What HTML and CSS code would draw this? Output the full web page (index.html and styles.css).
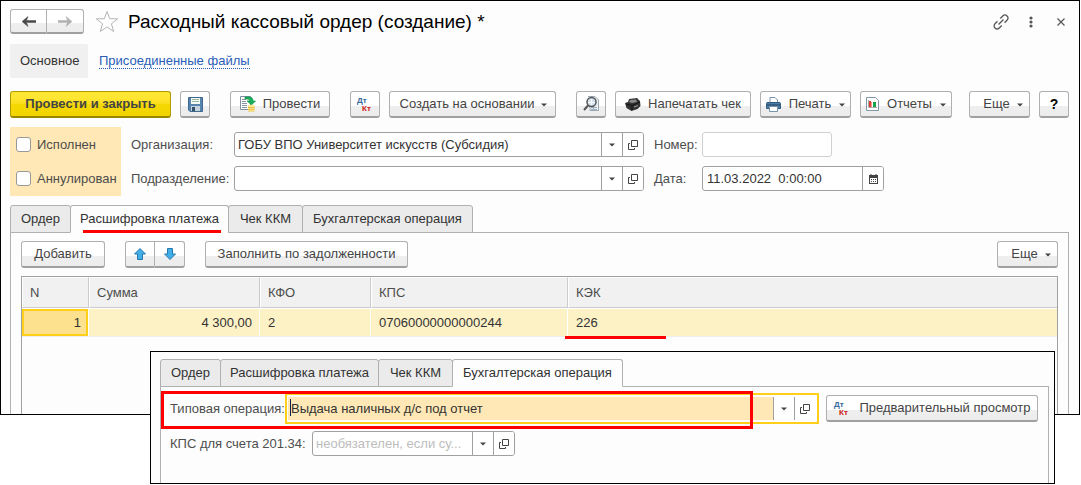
FILE: index.html
```html
<!DOCTYPE html>
<html lang="ru">
<head>
<meta charset="utf-8">
<meta name="viewport" content="width=device-width, initial-scale=1">
<title>Расходный кассовый ордер (создание)</title>
<link rel="stylesheet" href="styles.css">
</head>
<body>
<svg class="defs" aria-hidden="true">
  <symbol id="open" viewBox="0 0 10 10"><path d="M3.500.5h6v6h-6zM2 3.500H.5v6h6V8" fill="none" stroke="#444"/></symbol>
  <symbol id="caret" viewBox="0 0 6 4"><path d="M0 .5h6L3 3.500z" fill="#444"/></symbol>
</svg>

<main class="window">
  <header class="titlebar">
    <div class="btn-pair">
      <button class="btn" aria-label="Назад"><svg width="14" height="11" viewBox="0 0 14 11"><path d="M0 5.500L6 .5l-1.500 4H14v2H4.500l1.500 4z" fill="#4a4a4a" stroke="#4a4a4a" stroke-width=".5"/></svg></button>
      <button class="btn" aria-label="Вперед"><svg width="14" height="11" viewBox="0 0 14 11"><path d="M14 5.500L8 .5l1.500 4H0v2h9.500l-1.500 4z" fill="#b0b0b0" stroke="#b0b0b0" stroke-width=".5"/></svg></button>
    </div>
    <button class="bare star" aria-label="Избранное"><svg width="24" height="23" viewBox="0 0 24 23"><path d="M12 1.500l2.700 7.200 8 .2-6.300 4.900 2.300 7.700-6.700-4.600-6.700 4.600 2.300-7.700L1.300 8.900l8-.2z" fill="#fff" stroke="#b4b4b4"/></svg></button>
    <h1 class="title">Расходный кассовый ордер (создание) *</h1>
    <div class="window-tools">
      <button class="bare" aria-label="Ссылка"><svg width="18" height="18" viewBox="0 0 18 18"><g transform="rotate(-45 9 9)" fill="none" stroke="#555" stroke-width="1.300"><path d="M7 6H3.500a3 3 0 0 0 0 6H7M11 6h3.500a3 3 0 0 1 0 6H11M5.500 9h7"/></g></svg></button>
      <button class="bare" aria-label="Меню"><svg width="4" height="12" viewBox="0 0 4 12"><g fill="#555"><circle cx="2" cy="2" r="1.600"/><circle cx="2" cy="6" r="1.600"/><circle cx="2" cy="10" r="1.600"/></g></svg></button>
      <button class="bare" aria-label="Закрыть"><svg width="8" height="8" viewBox="0 0 8 8"><path d="M.5.5l7 7M7.500.5l-7 7" stroke="#555" stroke-width="1.200"/></svg></button>
    </div>
  </header>

  <nav class="sections">
    <span class="section-current">Основное</span>
    <a class="section-link" href="#files">Присоединенные файлы</a>
  </nav>

  <div class="commands">
    <button class="btn btn-primary">Провести и закрыть</button>
    <button class="btn btn-icon" aria-label="Записать"><svg width="15" height="15" viewBox="0 0 15 15"><path d="M.5.5h14v14H2l-1.500-1.500z" fill="#5684ad" stroke="#41698f"/><path d="M3 1h9v6H3z" fill="#f5faf5"/><path d="M4 2.500h7M4 4.500h7" stroke="#9ab99e"/><path d="M3 9h9v5H3z" fill="#c7d3dc"/><path d="M4 10h3v4H4z" fill="#344f68"/></svg></button>
    <button class="btn btn-post gap-wide"><svg width="16" height="16" viewBox="0 0 16 16"><path d="M.5.5h10v13H.5z" fill="#fff" stroke="#8090a0"/><path d="M2 3.500h4M2 5.500h4M2 7.500h5M2 9.500h5M2 11.500h5" stroke="#8797a5"/><path d="M5 1h4c3 0 4 1.500 4 4h2.500L11.500 9 7 5h2.500c0-2-1.500-2-4.500-2z" fill="#18b05a" stroke="#088a40" stroke-width=".6"/><path d="M8 10h6.500v5.500H8z" fill="#e9ba37"/><ellipse cx="11.200" cy="10" rx="3.200" ry="1.200" fill="#ffe995"/><path d="M8 12.200c2 1 4.500 1 6.500 0M8 14.200c2 1 4.500 1 6.500 0" fill="none" stroke="#fff1ad"/></svg>Провести</button>
    <button class="btn btn-icon gap-wide" aria-label="Проводки"><svg class="dtkt" width="18" height="18" viewBox="0 0 18 18"><text x="1" y="8" fill="#336699">Дт</text><text x="6" y="16" fill="#cc2010">Кт</text></svg></button>
    <button class="btn btn-create">Создать на основании<svg class="drop" width="6" height="4"><use href="#caret"/></svg></button>
    <button class="btn btn-icon gap-wide" aria-label="Просмотр"><svg width="16" height="16" viewBox="0 0 16 16"><path d="M5 .5h7l3.500 3.500v10.500H7V8" fill="#edf2f5" stroke="#9ca9b2"/><path d="M8 11.500h6M8 13.500h6M10.500 8v6" stroke="#9baebb"/><circle cx="8.500" cy="6" r="4.500" fill="#d4e3ed" stroke="#555" stroke-width="1.500"/><path d="M5 6.500h7M8.500 3v6" stroke="#f7fbff"/><path d="M5 9.500L1 14" stroke="#555" stroke-width="2"/></svg></button>
    <button class="btn btn-check"><svg width="16" height="13" viewBox="0 0 16 13"><path d="M0 5l3-1 1-3 8-1 3 3 .5 5-3 3-6 2-5-3z" fill="#333"/><path d="M5 2l6-.5 1 2.500-5 1-3-1z" fill="#888"/><path d="M1 6l6 1.500 8-3.500M7 8v4" fill="none" stroke="#111"/><path d="M9 9l4-1.500" stroke="#999"/></svg>Напечатать чек</button>
    <button class="btn btn-print"><svg width="15" height="15" viewBox="0 0 15 15"><path d="M4 6V.5h5l2.500 2.500v3" fill="#fff" stroke="#7992aa"/><path d="M1 5.500h13l.5 1v5H.5v-5z" fill="#4c7da8" stroke="#315a80"/><path d="M1 8h13" stroke="#20415f"/><path d="M3.500 9.500h8v5h-8z" fill="#fff" stroke="#7992aa"/></svg>Печать<svg class="drop" width="6" height="4"><use href="#caret"/></svg></button>
    <button class="btn btn-report"><svg width="13" height="14" viewBox="0 0 13 14"><path d="M.5.5h9l3 3v10H.5z" fill="#fff" stroke="#8496a8"/><path d="M2.500 3v7.500H11" fill="none" stroke="#aaa"/><path d="M3 4h2v6H3z" fill="#e23b2f"/><path d="M5 5h1v5H5z" fill="#f29b8f"/><path d="M7 5h3v5H7z" fill="#18a348"/></svg>Отчеты<svg class="drop" width="6" height="4"><use href="#caret"/></svg></button>
    <button class="btn btn-more push">Еще<svg class="drop" width="6" height="4"><use href="#caret"/></svg></button>
    <button class="btn btn-icon btn-help">?</button>
  </div>

  <form class="form">
    <div class="flags">
      <label class="flag"><input type="checkbox">Исполнен</label>
      <label class="flag"><input type="checkbox">Аннулирован</label>
    </div>
    <div class="fields">
      <label for="org">Организация:</label>
      <div class="field"><input id="org" type="text" value="ГОБУ ВПО Университет искусств (Субсидия)"><button type="button" aria-label="Список"><svg width="6" height="4"><use href="#caret"/></svg></button><button type="button" aria-label="Открыть"><svg width="10" height="10"><use href="#open"/></svg></button></div>
      <label for="num" class="second">Номер:</label>
      <div class="field field-number"><input id="num" type="text"></div>
      <label for="dep">Подразделение:</label>
      <div class="field"><input id="dep" type="text"><button type="button" aria-label="Список"><svg width="6" height="4"><use href="#caret"/></svg></button><button type="button" aria-label="Открыть"><svg width="10" height="10"><use href="#open"/></svg></button></div>
      <label for="date" class="second">Дата:</label>
      <div class="field field-date"><input id="date" type="text" value="11.03.2022  0:00:00"><button type="button" aria-label="Календарь"><svg width="9" height="10" viewBox="0 0 9 10"><path d="M0 1h9v9H0z" fill="#444"/><path d="M1 4h7v5H1z" fill="#fff"/><path d="M2 0v2M7 0v2" stroke="#444"/><path d="M2 5.500h5M2 7.500h5" stroke="#444" stroke-dasharray="1 1"/></svg></button></div>
    </div>
  </form>

  <div class="tabs">
    <button class="tab tab-order">Ордер</button>
    <button class="tab tab-detail active marked">Расшифровка платежа</button>
    <button class="tab tab-kkm">Чек ККМ</button>
    <button class="tab tab-entry">Бухгалтерская операция</button>
  </div>
  <section class="panel">
    <div class="panel-tools">
      <button class="btn btn-add">Добавить</button>
      <div class="btn-pair pair-blue">
        <button class="btn" aria-label="Вверх"><svg width="12" height="12" viewBox="0 0 12 12"><path d="M6 .5l5.500 5.500H8.500v5.500h-5V6H.5z" fill="#42aee8" stroke="#2878aa"/></svg></button>
        <button class="btn" aria-label="Вниз"><svg width="12" height="12" viewBox="0 0 12 12"><path d="M6 11.500L.5 6h3V.5h5V6h3z" fill="#42aee8" stroke="#2878aa"/></svg></button>
      </div>
      <button class="btn btn-fill gap-wide">Заполнить по задолженности</button>
      <button class="btn btn-more push">Еще<svg class="drop" width="6" height="4"><use href="#caret"/></svg></button>
    </div>
    <div class="grid-box">
      <table class="grid">
        <colgroup><col class="c-n"><col class="c-sum"><col class="c-kfo"><col class="c-kps"><col></colgroup>
        <thead><tr><th>N</th><th>Сумма</th><th>КФО</th><th>КПС</th><th>КЭК</th></tr></thead>
        <tbody><tr><td class="num selected">1</td><td class="num">4 300,00</td><td>2</td><td>07060000000000244</td><td class="underlined">226</td></tr></tbody>
      </table>
    </div>
  </section>
</main>

<aside class="inset">
  <div class="tabs">
    <button class="tab tab-order">Ордер</button>
    <button class="tab tab-detail">Расшифровка платежа</button>
    <button class="tab tab-kkm">Чек ККМ</button>
    <button class="tab tab-entry active">Бухгалтерская операция</button>
  </div>
  <section class="panel inset-panel">
    <div class="row">
      <label for="op">Типовая операция:</label>
      <div class="field field-focus"><span class="cursor"></span><input id="op" type="text" value="Выдача наличных д/с под отчет"><button aria-label="Список"><svg width="6" height="4"><use href="#caret"/></svg></button><button aria-label="Открыть"><svg width="10" height="10"><use href="#open"/></svg></button></div>
      <button class="btn btn-preview"><svg class="dtkt" width="18" height="18" viewBox="0 0 18 18"><text x="1" y="8" fill="#336699">Дт</text><text x="6" y="16" fill="#cc2010">Кт</text></svg>Предварительный просмотр</button>
      <span class="red-frame"></span>
    </div>
    <div class="row row-kps">
      <label for="kps">КПС для счета 201.34:</label>
      <div class="field field-kps"><input id="kps" type="text" placeholder="необязателен, если су..."><button aria-label="Список"><svg width="6" height="4"><use href="#caret"/></svg></button><button aria-label="Открыть"><svg width="10" height="10"><use href="#open"/></svg></button></div>
    </div>
  </section>
</aside>
</body>
</html>
```
FILE: styles.css
```css
* { box-sizing: border-box; }
body {
  margin: 0;
  min-height: 100vh;
  position: relative;
  background: #fff;
  color: #333;
  font: 13px/16px "Liberation Sans", Arial, sans-serif;
}
button, input { font: inherit; color: inherit; }
button { padding: 0; white-space: nowrap; }
svg { flex: none; display: block; }
label { color: #4d4d4d; white-space: nowrap; }
.defs { position: absolute; width: 0; height: 0; }
.dtkt { font-size: 8px; font-weight: bold; }

.window {
  margin-right: 1px;
  padding: 8px 10px 0 9px;
  border: 1px solid #000;
  background: #fdfdfd;
}

/* Buttons */
.btn {
  display: inline-flex;
  align-items: center;
  justify-content: center;
  height: 27px;
  border: 1px solid #b0b0b0;
  border-bottom: 2px solid #a0a0a0;
  border-radius: 3px;
  background: linear-gradient(#fff 58%, #efefef 58%, #ececec);
  color: #444;
}
.bare { border: 0; background: none; }
.btn-pair { display: flex; }
.btn-pair .btn { width: 37px; height: 25px; }
.btn-pair .btn:first-child { border-radius: 3px 0 0 3px; }
.btn-pair .btn:last-child { border-left: 0; border-radius: 0 3px 3px 0; }
.btn-pair.pair-blue { margin-left: 11px; }
.btn-pair.pair-blue .btn { width: 30px; height: 27px; }
.drop { margin: 2px 0 0 7px; }
.push { margin-left: auto; }
.btn-primary {
  width: 161px;
  border-color: #b69b00;
  border-bottom-color: #9a8500;
  background: linear-gradient(#ffe633 25%, #fbdc1a 50%, #f5d800 50%, #f2d500);
  font-weight: bold;
}
.btn-icon { width: 30px; }
.btn-post { width: 100px; gap: 7px; }
.btn-create { width: 167px; padding-left: 2px; }
.btn-check { width: 136px; gap: 7px; }
.btn-print { width: 91px; gap: 8px; }
.btn-report { width: 92px; gap: 8px; }
.btn-print .drop, .btn-report .drop { margin-left: 0; }
.btn-more { width: 61px; padding-left: 7px; }
.btn-help { color: #000; font-size: 14px; font-weight: bold; }
.btn-add { width: 84px; }
.btn-fill { width: 203px; }
.btn-preview { width: 212px; gap: 8px; }

.titlebar { display: flex; align-items: center; height: 25px; }
.star { margin-left: 11px; }
.title { margin: 0 0 0 9px; color: #000; font-size: 19px; line-height: 24px; font-weight: normal; white-space: nowrap; }
.window-tools { display: flex; align-items: center; gap: 24px; margin-left: auto; padding-right: 4px; }
.window-tools .bare:first-child { margin-right: -5px; }

.sections { display: flex; gap: 11px; margin-top: 10px; align-items: center; }
.section-current { padding: 9px 10px; width: 78px; border-radius: 2px; background: #f0f0f0; }
.section-link { color: #2a5db8; text-decoration: none; border-bottom: 1px dotted #2a5db8; line-height: 15px; }

.commands { display: flex; gap: 9px; margin-top: 13px; }
.commands .gap-wide, .panel-tools .gap-wide { margin-left: 11px; }

/* Fields */
.form { display: flex; gap: 10px; margin-top: 9px; }
.flags { display: flex; flex-direction: column; justify-content: space-between; width: 111px; padding: 10px 0 10px 6px; background: #ffe8b5; }
.flag { display: flex; align-items: center; gap: 6px; height: 15px; }
.flag input { appearance: none; flex: none; width: 15px; height: 15px; margin: 0; border: 1px solid #999; border-radius: 3px; background: #fff; }
.fields {
  display: grid;
  grid-template-columns: 103px minmax(200px, 410px) 58px 182px;
  row-gap: 9px;
  align-items: center;
  padding: 5px 0;
  flex: 1;
}
.second { padding-left: 10px; }
.field { display: flex; height: 25px; border: 1px solid #a0a0a0; border-radius: 3px; background: #fff; overflow: hidden; }
.field input { flex: 1; min-width: 0; border: 0; padding: 0 3px; background: none; outline: 0; white-space: pre; }
.field input::placeholder { color: #bdbdbd; opacity: 1; }
.field button { display: flex; align-items: center; justify-content: center; width: 21px; border: 0; border-left: 1px solid #a0a0a0; background: #fff; }
.field-number { width: 130px; border-color: #d0d0d0; }
.field-date input { padding-left: 4px; }

/* Tabs and panels */
.tabs { display: flex; margin-top: 9px; }
.tab { position: relative; height: 28px; margin-left: -1px; border: 1px solid #b0b0b0; border-radius: 3px 3px 0 0; background: #ebebeb; }
.tab-order { width: 61px; margin-left: 0; }
.tab-detail { width: 159px; }
.tab-kkm { width: 75px; }
.tab-entry { width: 171px; }
.tab.active { background: #fdfdfd; border-bottom-color: #fdfdfd; }
.tab.marked::after { content: ""; position: absolute; left: 12px; right: 7px; bottom: -1px; height: 3px; background: #f00; }
.panel { margin-top: -1px; border: 1px solid #b0b0b0; border-bottom: 0; padding: 8px 10px 0; }
.panel-tools { display: flex; gap: 9px; }
.grid-box { min-height: 138px; margin-top: 8px; border: 1px solid #a0a0a0; border-bottom: 0; }
.grid { width: 100%; table-layout: fixed; border-collapse: separate; border-spacing: 0; }
.c-n { width: 67px; }
.c-sum { width: 171px; }
.c-kfo { width: 111px; }
.c-kps { width: 197px; }
.grid th, .grid td { height: 31px; padding: 0 7px; text-align: left; font-weight: normal; }
.grid th { border: 1px solid #fff; border-right-color: #ccc; border-bottom-color: #ccc; background: #f1f1f1; color: #4d4d4d; }
.grid td { position: relative; height: 29px; border-top: 1px solid #fff; border-right: 1px solid #fff; border-bottom: 1px solid #eee; background: #fdf1c6; padding-left: 8px; }
.grid td.num { text-align: right; }
.grid td.selected { background: #fde18e; box-shadow: inset 0 0 0 2px #ffcf1a; }
.grid th:last-child, .grid td:last-child { border-right: 0; }
.underlined::after { content: ""; position: absolute; left: -3px; bottom: -3px; width: 101px; height: 3px; background: #f00; }

/* Inset window lying over the order form */
.inset { position: absolute; top: 351px; left: 150px; right: 26px; padding: 0 5px 0 9px; border: 1px solid #000; background: #fdfdfd; }
.inset .tabs { margin-top: 7px; }
.inset-panel { min-height: 97px; padding: 6px 9px 0; }
.row { position: relative; display: flex; align-items: center; }
.row label { width: 115px; }
.field-focus { position: relative; flex: 0 1 534px; height: 31px; border: 2px solid #ffcf1a; border-radius: 0; padding: 2px 2px 2px 1px; margin-right: 7px; }
.field-focus input { background: #ffe8b5; padding: 0 3px; }
.cursor { position: absolute; left: 3px; top: 4px; width: 1px; height: 17px; background: #102050; }
.red-frame { position: absolute; left: -9px; top: -2px; width: 592px; height: 38px; border: 3px solid #f00; pointer-events: none; }
.row-kps { margin-top: 7px; }
.row-kps label { width: 142px; }
.field-kps { width: 203px; }
```
